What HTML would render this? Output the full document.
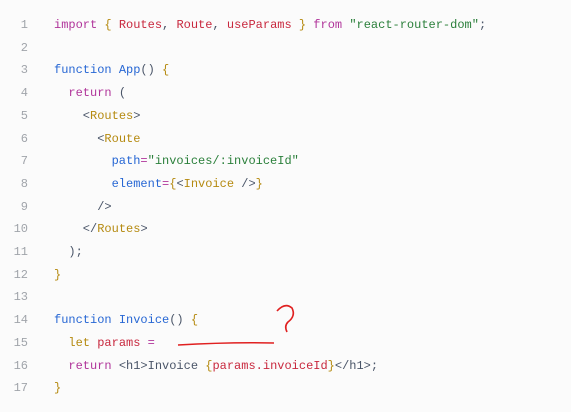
<!DOCTYPE html>
<html><head><meta charset="utf-8"><style>
html,body{margin:0;padding:0;background:#fbfbfb;width:571px;height:412px;overflow:hidden}
pre{margin:0;position:absolute;left:0;top:14px;font-family:"Liberation Mono",monospace;font-size:12px;line-height:22.7px;color:#4a5568}
.n{display:inline-block;width:28px;text-align:right;color:#a0a4aa;margin-right:26px}
.k{color:#b0349a}.v{color:#c8283e}.f{color:#2767d4}.t{color:#b58a10}.s{color:#2a7f3a}.p{color:#5a6270}.a{color:#2767d4}.e{color:#b0349a}
</style></head><body>
<pre><span class="n">1</span><span class="k">import</span> <span class="t">{</span> <span class="v">Routes</span>, <span class="v">Route</span>, <span class="v">useParams</span> <span class="t">}</span> <span class="k">from</span> <span class="s">"react-router-dom"</span>;
<span class="n">2</span>
<span class="n">3</span><span class="f">function</span> <span class="f">App</span>() <span class="t">{</span>
<span class="n">4</span>  <span class="k">return</span> (
<span class="n">5</span>    &lt;<span class="t">Routes</span>&gt;
<span class="n">6</span>      &lt;<span class="t">Route</span>
<span class="n">7</span>        <span class="a">path</span><span class="e">=</span><span class="s">"invoices/:invoiceId"</span>
<span class="n">8</span>        <span class="a">element</span><span class="e">=</span><span class="t">{</span>&lt;<span class="t">Invoice</span> /&gt;<span class="t">}</span>
<span class="n">9</span>      /&gt;
<span class="n">10</span>    &lt;/<span class="t">Routes</span>&gt;
<span class="n">11</span>  );
<span class="n">12</span><span class="t">}</span>
<span class="n">13</span>
<span class="n">14</span><span class="f">function</span> <span class="f">Invoice</span>() <span class="t">{</span>
<span class="n">15</span>  <span class="t">let</span> <span class="v">params</span> <span class="e">=</span>
<span class="n">16</span>  <span class="k">return</span> &lt;h1&gt;Invoice <span class="t">{</span><span class="v">params.invoiceId</span><span class="t">}</span>&lt;/h1&gt;;
<span class="n">17</span><span class="t">}</span></pre>
<svg width="571" height="412" style="position:absolute;left:0;top:0">
<path d="M178 345 Q230 342 274 343" stroke="#e02020" stroke-width="1.6" fill="none"/>
<path d="M277 311 Q285 302 292 308 Q296 316 288 322 Q284 326 287 332" stroke="#e02020" stroke-width="1.6" fill="none"/>
</svg>
</body></html>
